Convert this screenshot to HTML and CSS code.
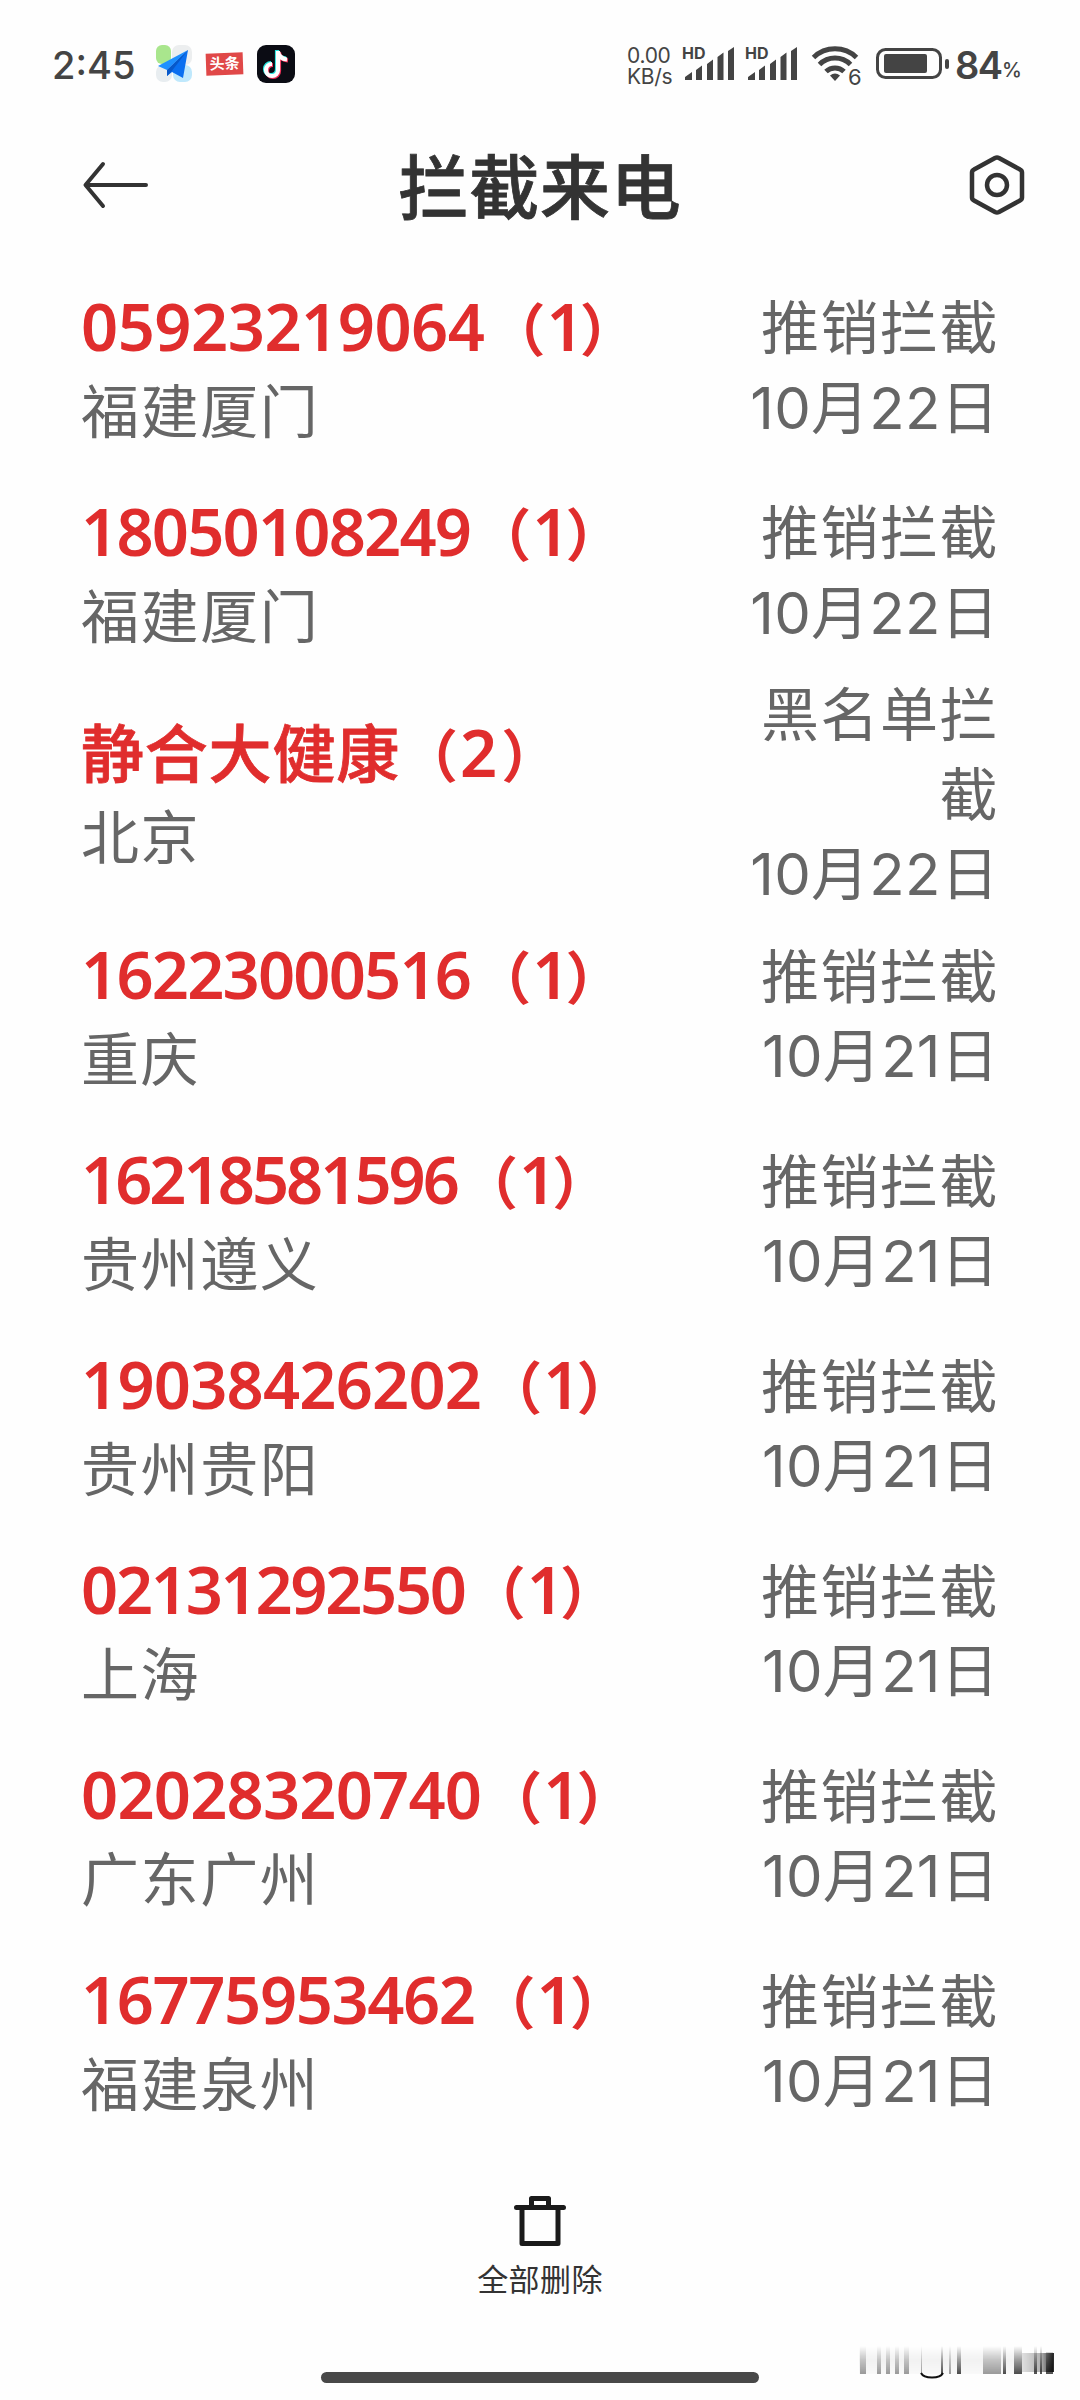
FILE: index.html
```html
<!DOCTYPE html>
<html lang="zh-CN">
<head>
<meta charset="utf-8">
<title>拦截来电</title>
<link rel="stylesheet" href="styles.css">
</head>
<body>
<div class="status">
  <span class="clock">2:45</span>
  <svg class="app" viewBox="0 0 38 38">
    <rect x="1" y="0" width="15" height="19" rx="6" fill="#a9e68d"/>
    <rect x="17" y="0" width="20" height="20" rx="7" fill="#eceeef"/>
    <rect x="1" y="20" width="16" height="17" rx="7" fill="#e8edf0"/>
    <rect x="18" y="20" width="19" height="17" rx="7" fill="#bfe8fc"/>
    <path d="M33 5 3 21l9 4z" fill="#1e90ff"/><path d="M33 5 12 25v6l5-4 11 6z" fill="#0a6ff0"/><path d="M12 25 33 5 16 27l-4 4z" fill="#0758c9"/>
  </svg>
  <span class="news">头条</span>
  <svg class="app" viewBox="0 0 38 38">
    <rect width="38" height="38" rx="9" fill="#0b0c14"/>
    <g fill="none" stroke-width="4.2">
      <path stroke="#25e4dd" d="M20 5v19a6 6 0 1 1-6-6M20 6c1 5 4 7 9 7.500"/>
      <path stroke="#f0325a" d="M22 7v19a6 6 0 1 1-6-6M22 8c1 5 4 7 9 7.500"/>
      <path stroke="#fff" d="M21 6v19a6 6 0 1 1-6-6M21 7c1 5 4 7 9 7.500"/>
    </g>
  </svg>
  <span class="speed">0.00<br>KB/s</span>
  <svg class="signal" viewBox="0 0 54 40"><use href="#sig"/></svg>
  <svg class="signal" viewBox="0 0 54 40"><use href="#sig"/></svg>
  <svg class="wifi" viewBox="0 0 52 42">
    <g fill="none" stroke="#444" stroke-width="5">
      <path d="M2.500 13.500a31 31 0 0 1 43 0M8.500 20.500a22 22 0 0 1 31 0M15 27.500a13 13 0 0 1 18 0"/>
    </g>
    <path d="M19 31.500q5-4 10 0L24 37z" fill="#444"/>
    <text x="37" y="41" font-size="22" fill="#444">6</text>
  </svg>
  <svg class="battery" viewBox="0 0 74 32">
    <rect x="1.500" y="1.500" width="63" height="28" rx="8" fill="none" stroke="#444" stroke-width="3"/>
    <rect x="8" y="6" width="43" height="19" rx="2" fill="#444"/>
    <rect x="69" y="11" width="4" height="10" rx="2" fill="#444"/>
  </svg>
  <span class="level">84</span><span class="percent">%</span>
  <svg class="defs" width="0" height="0">
    <g id="sig" fill="#444">
      <text x="0" y="13" font-size="16" font-weight="700">HD</text>
      <path d="M3 31l7-5v8H3zM14 24l6-4.500V34h-6zM25 18l6-4.500V34h-6zM35.500 11l6-4.500V34h-6zM46 5l6-4V34h-6z"/>
    </g>
  </svg>
</div>
<header class="header">
  <svg class="back" viewBox="0 0 64 46"><path d="M20 2 2.500 23 20 44M3 23h60" fill="none" stroke="#333" stroke-width="4" stroke-linejoin="round" stroke-linecap="round"/></svg>
  <h1>拦截来电</h1>
  <svg class="gear" viewBox="0 0 56 62"><path d="M26 4Q28 3 30 4L51 15.500Q53 16.500 53 18.500V43.500Q53 45.500 51 46.500L30 58Q28 59 26 58L5 46.500Q3 45.500 3 43.500V18.500Q3 16.500 5 15.500z" fill="none" stroke="#333" stroke-width="4.500" stroke-linejoin="round"/><circle cx="28" cy="31" r="10" fill="none" stroke="#333" stroke-width="4.500"/></svg>
</header>
<main class="list">
  <div class="row"><div class="who"><div class="num wide">05923219064<span class="cnt"><span class="po">（</span><span class="n">1</span><span class="pc">）</span></span></div><div class="loc">福建厦门</div></div><div class="info"><div class="kind">推销拦截</div><div>10月22日</div></div></div>
  <div class="row"><div class="who"><div class="num snug">18050108249<span class="cnt"><span class="po">（</span><span class="n">1</span><span class="pc">）</span></span></div><div class="loc">福建厦门</div></div><div class="info"><div class="kind">推销拦截</div><div>10月22日</div></div></div>
  <div class="row"><div class="who"><div class="num"><span class="name">静合大健康</span><span class="cnt two"><span class="po">（</span><span class="n">2</span><span class="pc">）</span></span></div><div class="loc">北京</div></div><div class="info"><div class="kind">黑名单拦截</div><div>10月22日</div></div></div>
  <div class="row"><div class="who"><div class="num snug">16223000516<span class="cnt"><span class="po">（</span><span class="n">1</span><span class="pc">）</span></span></div><div class="loc">重庆</div></div><div class="info"><div class="kind">推销拦截</div><div>10月21日</div></div></div>
  <div class="row"><div class="who"><div class="num tightest">16218581596<span class="cnt"><span class="po">（</span><span class="n">1</span><span class="pc">）</span></span></div><div class="loc">贵州遵义</div></div><div class="info"><div class="kind">推销拦截</div><div>10月21日</div></div></div>
  <div class="row"><div class="who"><div class="num">19038426202<span class="cnt"><span class="po">（</span><span class="n">1</span><span class="pc">）</span></span></div><div class="loc">贵州贵阳</div></div><div class="info"><div class="kind">推销拦截</div><div>10月21日</div></div></div>
  <div class="row"><div class="who"><div class="num tight">02131292550<span class="cnt"><span class="po">（</span><span class="n">1</span><span class="pc">）</span></span></div><div class="loc">上海</div></div><div class="info"><div class="kind">推销拦截</div><div>10月21日</div></div></div>
  <div class="row"><div class="who"><div class="num">02028320740<span class="cnt"><span class="po">（</span><span class="n">1</span><span class="pc">）</span></span></div><div class="loc">广东广州</div></div><div class="info"><div class="kind">推销拦截</div><div>10月21日</div></div></div>
  <div class="row"><div class="who"><div class="num close">16775953462<span class="cnt"><span class="po">（</span><span class="n">1</span><span class="pc">）</span></span></div><div class="loc">福建泉州</div></div><div class="info"><div class="kind">推销拦截</div><div>10月21日</div></div></div>
</main>
<footer class="footer">
  <svg class="trash" viewBox="0 0 52 52"><path d="M2.500 12.500h47M8 13v35.500h36V13M17.500 12V3.500h17V12" fill="none" stroke="#1a1a1a" stroke-width="5" stroke-linejoin="round" stroke-linecap="round"/></svg>
  <span class="del">全部删除</span>
  <div class="home"></div>
</footer>
<svg class="smear" viewBox="0 0 200 40">
  <defs>
    <linearGradient id="g" x1="0" y1="0" x2="0" y2="1"><stop offset="0" stop-color="#000" stop-opacity="0"/><stop offset="1" stop-color="#000" stop-opacity=".38"/></linearGradient>
    <linearGradient id="h" x1="0" y1="0" x2="0" y2="1"><stop offset="0" stop-color="#000" stop-opacity="0"/><stop offset=".5" stop-color="#000" stop-opacity=".05"/><stop offset="1" stop-color="#000" stop-opacity=".02"/></linearGradient>
    <linearGradient id="d" x1="0" y1="0" x2="0" y2="1"><stop offset="0" stop-color="#000" stop-opacity="0"/><stop offset="1" stop-color="#000" stop-opacity=".7"/></linearGradient>
    <linearGradient id="r" x1="0" y1="0" x2="1" y2="0"><stop offset="0" stop-color="#000" stop-opacity=".12"/><stop offset=".6" stop-color="#000" stop-opacity=".3"/><stop offset="1" stop-color="#000" stop-opacity=".85"/></linearGradient>
  </defs>
  <g class="soft">
    <rect x="4" y="2" width="163" height="28" fill="url(#h)"/>
    <path fill="url(#g)" d="M5 2h6v28H5zM22 2h4v28h-4zM31 2h4v28h-4zM40 2h4v28h-4zM49 2h5v28h-5zM128 2h18v28h-18zM94 2h2v28h-2zM66 2h1v28h-1z"/>
    <path fill="url(#d)" d="M86 2h2v28h-2zM102 2h4v28h-4zM148 2h3v28h-3zM159 2h8v28h-8zM179 2h3v28h-3zM185 2h2v28h-2zM191 8h7v22h-7z"/>
    <rect x="167" y="9" width="32" height="19" fill="url(#r)"/>
  </g>
  <path d="M66 29c3 6 19 6 22 0" fill="none" stroke="#111" stroke-width="2"/>
</svg>
</body>
</html>
```
FILE: styles.css
```css
* { box-sizing: border-box; }
body {
  margin: 0;
  width: 1080px;
  height: 2400px;
  position: relative;
  display: flex;
  flex-direction: column;
  background: #fefefe;
  color: #333;
  font-family: Inter, "Noto Sans CJK SC", sans-serif;
  overflow: hidden;
}
svg { display: block; flex: none; overflow: visible; }
.status {
  height: 128px;
  padding-left: 52px;
  display: flex;
  align-items: center;
  color: #444;
  white-space: nowrap;
}
.clock { width: 103px; font-size: 38px; font-weight: 500; padding-top: 2px; }
.app { width: 38px; height: 38px; }
.news {
  width: 37px;
  height: 22px;
  margin: 0 14px 0 13px;
  background: #e04848;
  color: #fff;
  font-size: 15px;
  line-height: 21px;
  font-weight: 700;
  text-align: center;
  transform: rotate(-2deg);
}
.speed { width: 55px; margin-left: 332px; font-size: 21px; line-height: 21px; padding-top: 3px; letter-spacing: -0.3px; }
.signal { width: 54px; height: 40px; margin: 3px 9px 0 0; }
.wifi { width: 52px; height: 42px; margin: 2px 13px 0 3px; }
.battery { width: 74px; height: 32px; margin-right: 5px; }
.level { font-size: 38px; font-weight: 600; width: 47px; letter-spacing: -1.5px; padding-top: 2px; }
.percent { font-size: 20px; font-weight: 500; padding-top: 11px; }
.defs { width: 0; height: 0; }
.header {
  height: 138px;
  padding: 0 55px 24px;
  display: grid;
  grid-template-columns: 1fr auto 1fr;
  align-items: center;
}
.back { width: 64px; height: 46px; margin-left: 28px; }
.gear { width: 56px; height: 62px; justify-self: end; }
h1 {
  margin: 0;
  padding-top: 7px;
  font-size: 70px;
  font-weight: 500;
  letter-spacing: 0.8px;
  line-height: 107px;
  -webkit-text-stroke: 0.8px currentColor;
}
.list { padding: 0 81px; }
.row {
  min-height: 205px;
  display: flex;
  align-items: center;
  justify-content: space-between;
}
.num {
  color: #e02d2d;
  font-family: "Noto Sans", "Noto Sans CJK SC", sans-serif;
  font-size: 65px;
  font-weight: 600;
  line-height: 84px;
  height: 84px;
  letter-spacing: -0.8px;
  white-space: nowrap;
}
.num.wide { letter-spacing: -0.5px; }
.num.close { letter-spacing: -1.4px; }
.num.snug { letter-spacing: -1.8px; }
.num.tight { letter-spacing: -2.3px; }
.num.tightest { letter-spacing: -3px; }
.name { font-size: 63px; font-weight: 500; letter-spacing: 0.8px; -webkit-text-stroke: 0.8px currentColor; }
.cnt { margin-left: 4px; letter-spacing: 0; }
.po, .pc { font-size: 57px; }
.po { letter-spacing: 1px; }
.n { letter-spacing: -4px; }
.two { margin-left: 1px; }
.two .po { letter-spacing: 2px; }
.two .n { letter-spacing: 4px; }
.loc { color: #666; font-size: 58px; line-height: 84px; padding-top: 2px; letter-spacing: 1.6px; }
.info {
  width: 260px;
  color: #666;
  font-size: 58px;
  line-height: 79.6px;
  letter-spacing: 0.3px;
  text-align: right;
}
.kind { letter-spacing: 1.5px; }
.footer {
  flex: 1;
  display: flex;
  flex-direction: column;
  align-items: center;
  padding-top: 50px;
}
.trash { width: 52px; height: 52px; }
.del { font-size: 31px; line-height: 40px; margin-top: 13px; letter-spacing: 0.4px; }
.home { width: 438px; height: 11px; margin-top: 72px; border-radius: 6px; background: #484848; }
.smear { position: absolute; left: 855px; top: 2344px; width: 200px; height: 40px; }
.soft { filter: blur(0.7px); }
```
